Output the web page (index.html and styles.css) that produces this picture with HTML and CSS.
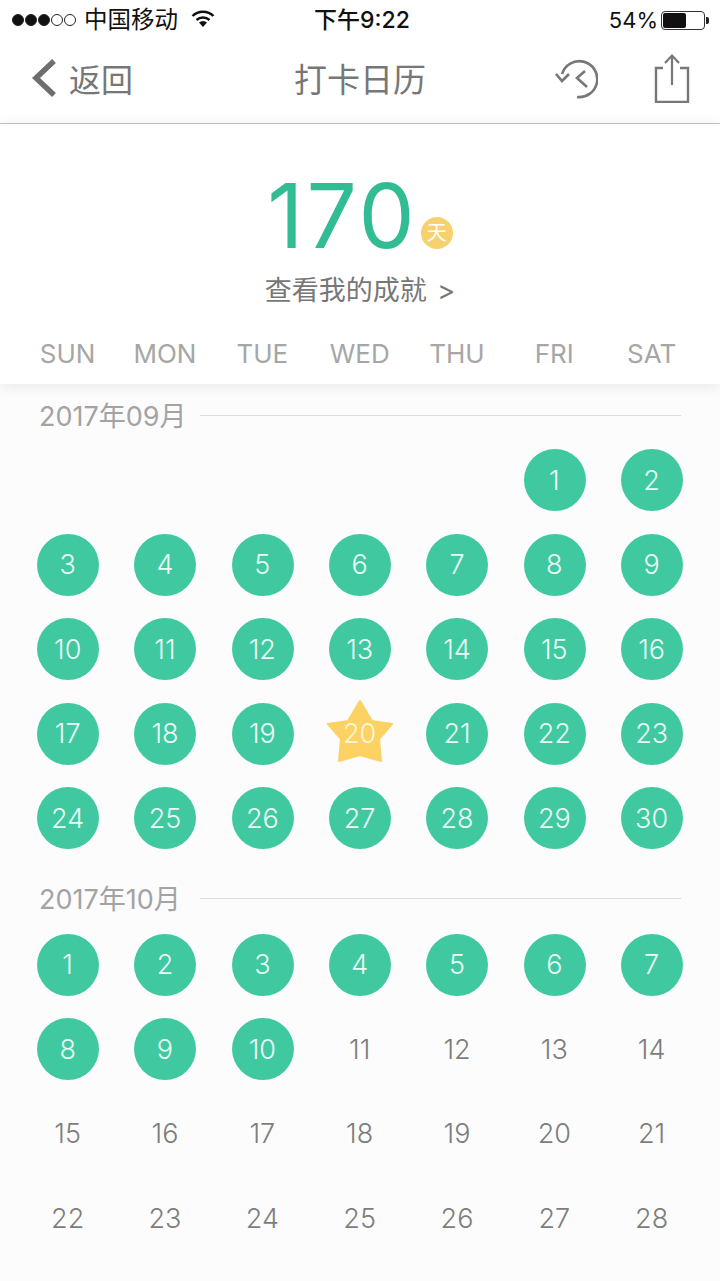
FILE: index.html
```html
<!DOCTYPE html>
<html lang="en">

<head>
    <meta charset="UTF-8">
    <meta name="viewport" content="width=device-width, initial-scale=1.0">
    <title>打卡日历</title>
    <link rel="stylesheet" href="styles.css">
</head>

<body>
    <div class="status">
        <div class="status-left">
            <span class="dots"><i class="on"></i><i class="on"></i><i class="on"></i><i></i><i></i></span>
            <span class="carrier">中国移动</span>
            <svg class="wifi" width="24" height="17" viewBox="0 0 24 17">
                <path d="M1.5 6 A15 15 0 0 1 22.5 6" fill="none" stroke="#111" stroke-width="2.4" />
                <path d="M5.5 10 A9.5 9.5 0 0 1 18.5 10" fill="none" stroke="#111" stroke-width="2.4" />
                <path d="M8 12.6 A6 6 0 0 1 16 12.6 L12 17 Z" fill="#111" />
            </svg>
        </div>
        <div class="status-time">下午9:22</div>
        <div class="status-right">
            <span>54%</span>
            <span class="battery"><span class="battery-fill"></span></span>
            <span class="battery-tip"></span>
        </div>
    </div>

    <div class="nav">
        <div class="nav-back">
            <svg width="28" height="40" viewBox="0 0 28 40">
                <path d="M24 3 L6 20 L24 37" fill="none" stroke="#6e6e6e" stroke-width="5.5" />
            </svg>
            <span>返回</span>
        </div>
        <div class="nav-title">打卡日历</div>
        <div class="nav-icons">
            <svg class="icon-history" width="44" height="42" viewBox="0 0 44 42">
                <path d="M8 16 A18 18 0 1 1 23 39" fill="none" stroke="#777" stroke-width="2.6" />
                <path d="M2 16 L8 23 L15 16" fill="none" stroke="#777" stroke-width="2.6" />
                <path d="M31 13 L23 20 L33 29" fill="none" stroke="#777" stroke-width="2.6" />
            </svg>
            <svg class="icon-share" width="36" height="50" viewBox="0 0 36 50">
                <path d="M9 15 H2 V49 H34 V15 H26" fill="none" stroke="#777" stroke-width="2.4" />
                <path d="M18 3 V32" fill="none" stroke="#777" stroke-width="2.2" />
                <path d="M11 10 L18 2.5 L25 10" fill="none" stroke="#777" stroke-width="2.2" />
            </svg>
        </div>
    </div>

    <div class="top">
        <div class="count">
            <span class="count-num">170</span>
            <span class="count-unit">天</span>
        </div>
        <div class="achieve">查看我的成就 <span class="achieve-arrow">&gt;</span></div>
        <div class="weekdays">
            <span>SUN</span><span>MON</span><span>TUE</span><span>WED</span><span>THU</span><span>FRI</span><span>SAT</span>
        </div>
    </div>

    <div class="month month-sep">
        <div class="month-head"><span>2017年09月</span><i></i></div>
        <div class="days">
            <span class="day"></span><span class="day"></span><span class="day"></span><span class="day"></span><span class="day"></span>
            <span class="day done">1</span><span class="day done">2</span>
            <span class="day done">3</span><span class="day done">4</span><span class="day done">5</span><span class="day done">6</span><span class="day done">7</span><span class="day done">8</span><span class="day done">9</span>
            <span class="day done">10</span><span class="day done">11</span><span class="day done">12</span><span class="day done">13</span><span class="day done">14</span><span class="day done">15</span><span class="day done">16</span>
            <span class="day done">17</span><span class="day done">18</span><span class="day done">19</span>
            <span class="day star">
                <svg width="68" height="64" viewBox="0 0 68 64">
                    <path d="M34 1 L46 21 L66 24 L53 39 L55 61 L34 55 L13 61 L15 39 L2 24 L22 21 Z" fill="#fbd263" stroke="#fbd263" stroke-width="2" stroke-linejoin="round" />
                </svg>
                <b>20</b>
            </span>
            <span class="day done">21</span><span class="day done">22</span><span class="day done">23</span>
            <span class="day done">24</span><span class="day done">25</span><span class="day done">26</span><span class="day done">27</span><span class="day done">28</span><span class="day done">29</span><span class="day done">30</span>
        </div>
    </div>

    <div class="month month-oct">
        <div class="month-head"><span>2017年10月</span><i></i></div>
        <div class="days">
            <span class="day done">1</span><span class="day done">2</span><span class="day done">3</span><span class="day done">4</span><span class="day done">5</span><span class="day done">6</span><span class="day done">7</span>
            <span class="day done">8</span><span class="day done">9</span><span class="day done">10</span><span class="day">11</span><span class="day">12</span><span class="day">13</span><span class="day">14</span>
            <span class="day">15</span><span class="day">16</span><span class="day">17</span><span class="day">18</span><span class="day">19</span><span class="day">20</span><span class="day">21</span>
            <span class="day">22</span><span class="day">23</span><span class="day">24</span><span class="day">25</span><span class="day">26</span><span class="day">27</span><span class="day">28</span>
        </div>
    </div>
</body>

</html>
```

FILE: styles.css
```css
* {
    box-sizing: border-box;
}

html,
body {
    height: 1281px;
    overflow: hidden;
}

body {
    margin: 0;
    background: #fcfcfc;
    font-family: "Inter", "Noto Sans CJK SC", sans-serif;
    color: #777;
}

/* status bar */
.status {
    height: 40px;
    background: #fff;
    display: flex;
    align-items: center;
    justify-content: space-between;
    padding: 0 11px 0 12px;
    color: #111;
    font-size: 22px;
    position: relative;
}

.status-left {
    display: flex;
    align-items: center;
}

.dots {
    display: flex;
    gap: 1px;
    margin-right: 8px;
}

.dots i {
    width: 12px;
    height: 12px;
    border-radius: 50%;
    border: 1px solid #222;
}

.dots i.on {
    background: #111;
}

.carrier {
    font-size: 23.5px;
    line-height: 40px;
}

.wifi {
    margin-left: 13px;
    margin-bottom: 3px;
}

.status-time {
    position: absolute;
    left: 314px;
    top: 0;
    line-height: 40px;
    font-size: 23px;
    font-weight: 500;
}

.status-right {
    display: flex;
    align-items: center;
}

.battery {
    width: 44px;
    height: 19px;
    border: 1px solid #333;
    border-radius: 4px;
    padding: 1px;
    margin-left: 3px;
}

.battery-fill {
    display: block;
    width: 23px;
    height: 15px;
    background: #111;
    border-radius: 2px;
}

.battery-tip {
    width: 3px;
    height: 7px;
    background: #222;
    margin-left: 1px;
    border-radius: 0 2px 2px 0;
}

/* nav */
.nav {
    height: 84px;
    background: #fff;
    border-bottom: 1px solid #c4c4c4;
    position: relative;
    display: flex;
    align-items: center;
    justify-content: space-between;
    padding: 0 30px 7px 30px;
}

.nav-back {
    display: flex;
    align-items: center;
    font-size: 32px;
    gap: 11px;
}

.nav-title {
    position: absolute;
    left: 0;
    right: 0;
    top: 16px;
    text-align: center;
    font-size: 33px;
    line-height: 48px;
    pointer-events: none;
}

.nav-icons {
    display: flex;
    align-items: center;
    gap: 56px;
}

.icon-history {
    margin-top: 2px;
}

/* top summary */
.top {
    height: 260px;
    background: #fff;
    box-shadow: 0 2px 14px rgba(0, 0, 0, 0.09);
    position: relative;
    z-index: 1;
}

.count {
    display: flex;
    justify-content: center;
    align-items: flex-end;
    padding-top: 47px;
    height: 142px;
}

.count-num {
    font-size: 89px;
    line-height: 100px;
    color: #32bc94;
    font-weight: 400;
    letter-spacing: 3px;
}

.count-unit {
    width: 32px;
    height: 32px;
    border-radius: 50%;
    background: #f8d16f;
    color: #fff;
    font-size: 20px;
    line-height: 32px;
    text-align: center;
    margin-left: 3px;
    margin-bottom: 17px;
}

.achieve {
    text-align: center;
    font-size: 27px;
    line-height: 38px;
    margin-top: 6px;
    color: #777;
}

.achieve-arrow {
    margin-left: 3px;
}

.weekdays {
    display: grid;
    grid-template-columns: repeat(7, 97.33px);
    padding-left: 19px;
    margin-top: 26px;
    font-size: 26px;
    line-height: 36px;
    color: #a6a6a6;
    text-align: center;
}

/* months */
.month-head {
    display: flex;
    align-items: center;
    height: 30px;
    padding: 0 39px;
    font-size: 27px;
    color: #a3a3a3;
}

.month-head span {
    width: 161px;
    padding-bottom: 2px;
}

.month-head i {
    flex: 1;
    height: 1px;
    background: #dcdcdc;
}

.month-sep {
    padding-top: 16px;
}

.month-oct {
    padding-top: 23px;
}

.days {
    display: grid;
    grid-template-columns: repeat(7, 97.33px);
    grid-auto-rows: 84.5px;
    padding-left: 19px;
    padding-top: 8px;
}

.month-oct .days {
    padding-top: 9px;
}

.day {
    display: flex;
    align-items: center;
    justify-content: center;
    font-size: 27px;
    color: #7d7d7d;
    font-weight: 300;
    position: relative;
    z-index: 0;
}

.done {
    color: #eafaf5;
}

.done::before {
    content: "";
    position: absolute;
    left: 18px;
    top: 11px;
    width: 62px;
    height: 62px;
    border-radius: 50%;
    background: #40c9a1;
    z-index: -1;
}

.day b {
    position: relative;
    font-weight: 300;
    color: #fff6da;
}

.star svg {
    position: absolute;
    left: 15px;
    top: 8px;
}
```
